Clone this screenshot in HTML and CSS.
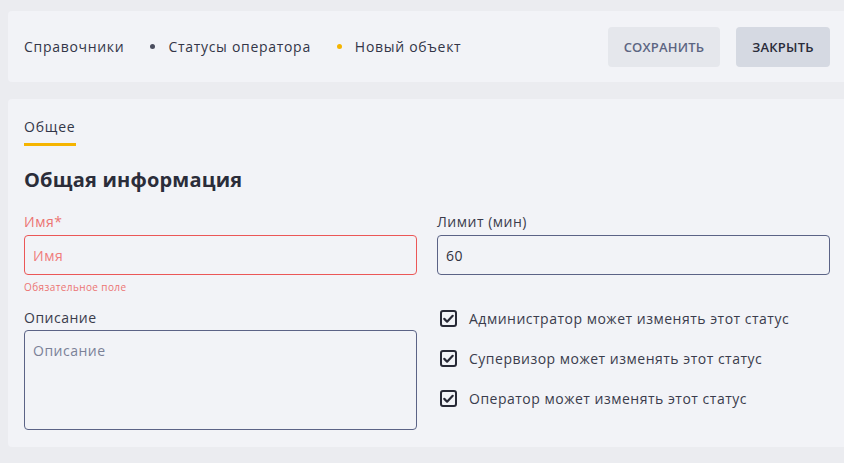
FILE: index.html
```html
<!DOCTYPE html>
<html lang="ru">

<head>
  <meta charset="UTF-8">
  <meta name="viewport" content="width=device-width, initial-scale=1.0">
  <title>Новый объект</title>
  <link rel="stylesheet" href="styles.css">
</head>

<body>
  <header class="topbar">
    <nav class="crumbs">
      <span class="crumbs__item">Справочники</span>
      <span class="crumbs__dot"></span>
      <span class="crumbs__item">Статусы оператора</span>
      <span class="crumbs__dot crumbs__dot--active"></span>
      <span class="crumbs__item">Новый объект</span>
    </nav>
    <div class="actions">
      <button class="btn btn--save">Сохранить</button>
      <button class="btn btn--close">Закрыть</button>
    </div>
  </header>

  <main class="card">
    <div class="tabs">
      <span class="tab tab--active">Общее</span>
    </div>
    <h2 class="section-title">Общая информация</h2>

    <div class="form">
      <div class="form__col">
        <label class="field field--error">
          <span class="field__label">Имя*</span>
          <input class="field__input" type="text" placeholder="Имя">
          <span class="field__hint">Обязательное поле</span>
        </label>
        <label class="field field--desc">
          <span class="field__label">Описание</span>
          <textarea class="field__input field__textarea" placeholder="Описание"></textarea>
        </label>
      </div>

      <div class="form__col">
        <label class="field">
          <span class="field__label">Лимит (мин)</span>
          <input class="field__input" type="text" value="60">
        </label>
        <div class="checks">
          <label class="check">
            <span class="check__box">
              <svg viewBox="0 0 17 17" width="17" height="17"><path d="M4.3 8.9l2.8 2.8 5.6-5.9" fill="none" stroke="#272936" stroke-width="2.2" stroke-linecap="round" stroke-linejoin="round"/></svg>
            </span>
            Администратор может изменять этот статус
          </label>
          <label class="check">
            <span class="check__box">
              <svg viewBox="0 0 17 17" width="17" height="17"><path d="M4.3 8.9l2.8 2.8 5.6-5.9" fill="none" stroke="#272936" stroke-width="2.2" stroke-linecap="round" stroke-linejoin="round"/></svg>
            </span>
            Супервизор может изменять этот статус
          </label>
          <label class="check">
            <span class="check__box">
              <svg viewBox="0 0 17 17" width="17" height="17"><path d="M4.3 8.9l2.8 2.8 5.6-5.9" fill="none" stroke="#272936" stroke-width="2.2" stroke-linecap="round" stroke-linejoin="round"/></svg>
            </span>
            Оператор может изменять этот статус
          </label>
        </div>
      </div>
    </div>
  </main>
</body>

</html>
```

FILE: styles.css
```css
* {
  box-sizing: border-box;
}

body {
  margin: 0;
  padding: 11px 0 0 8px;
  background: #ebecf0;
  font-family: 'Open Sans', 'Noto Sans', sans-serif;
  font-size: 14px;
  letter-spacing: 0.5px;
  color: #30323f;
}

.topbar {
  display: flex;
  align-items: center;
  height: 71px;
  padding: 0 14px 0 16px;
  background: #f2f3f7;
  border-radius: 4px 0 0 4px;
}

.crumbs {
  display: flex;
  align-items: center;
  letter-spacing: 0.7px;
  color: #333648;
}

.crumbs__dot {
  width: 5px;
  height: 5px;
  border-radius: 50%;
  background: #4a4d5e;
  margin: 0 13px 0 26px;
}

.crumbs__dot--active {
  background: #f5b400;
}

.actions {
  display: flex;
  gap: 16px;
  margin-left: auto;
}

.btn {
  height: 40px;
  border: 0;
  border-radius: 4px;
  padding: 0 12px;
  font-family: inherit;
  font-size: 13px;
  font-weight: 600;
  letter-spacing: 0.2px;
  text-transform: uppercase;
  cursor: pointer;
}

.btn--save {
  width: 112px;
  background: #e5e7ec;
  color: #5c6582;
}

.btn--close {
  width: 94px;
  background: #d5d9e2;
  color: #2a2c3a;
}

.card {
  margin-top: 17px;
  padding: 19px 14px 17px 16px;
  background: #f2f3f7;
  border-radius: 4px 0 0 4px;
}

.tabs {
  display: flex;
}

.tab {
  line-height: 18px;
  padding-bottom: 7px;
  border-bottom: 3px solid transparent;
  letter-spacing: 0.8px;
  color: #333648;
}

.tab--active {
  border-bottom-color: #f5b400;
}

.section-title {
  margin: 22px 0 0;
  font-size: 20px;
  line-height: 24px;
  font-weight: 700;
  letter-spacing: 0.2px;
  color: #2b2d3a;
}

.form {
  display: grid;
  grid-template-columns: 1fr 1fr;
  gap: 20px;
  margin-top: 21px;
}

.form__col {
  display: flex;
  flex-direction: column;
}

.field {
  display: flex;
  flex-direction: column;
}

.field__label {
  line-height: 18px;
  margin-bottom: 4px;
  color: #3a3c4c;
}

.field__input {
  height: 40px;
  padding: 0 8px;
  border: 1px solid #5b6386;
  border-radius: 4px;
  background: transparent;
  font-family: inherit;
  font-size: 14px;
  letter-spacing: 0.5px;
  color: #30323f;
  outline: none;
}

.field__input::placeholder {
  color: #7b8197;
}

.field--error .field__label {
  color: #ec7373;
}

.field--error .field__input {
  border-color: #eb5757;
}

.field--error .field__input::placeholder {
  color: #f07c7c;
}

.field__hint {
  margin-top: 6px;
  line-height: 12px;
  font-size: 10px;
  letter-spacing: 0.4px;
  color: #ec7373;
}

.field--desc {
  margin-top: 16px;
}

.field--desc .field__label {
  margin-bottom: 3px;
}

.field__textarea {
  height: 100px;
  padding: 10px 8px;
  resize: none;
}

.checks {
  display: flex;
  flex-direction: column;
  gap: 16px;
  margin-top: 31px;
  padding-left: 3px;
}

.check {
  display: flex;
  align-items: center;
  gap: 12px;
  height: 24px;
  color: #3a3c4c;
  cursor: pointer;
}

.check__box {
  display: flex;
  width: 17px;
  height: 17px;
  border: 2px solid #272936;
  border-radius: 3px;
}

.check__box svg {
  margin: -2px;
  flex: none;
}
```
